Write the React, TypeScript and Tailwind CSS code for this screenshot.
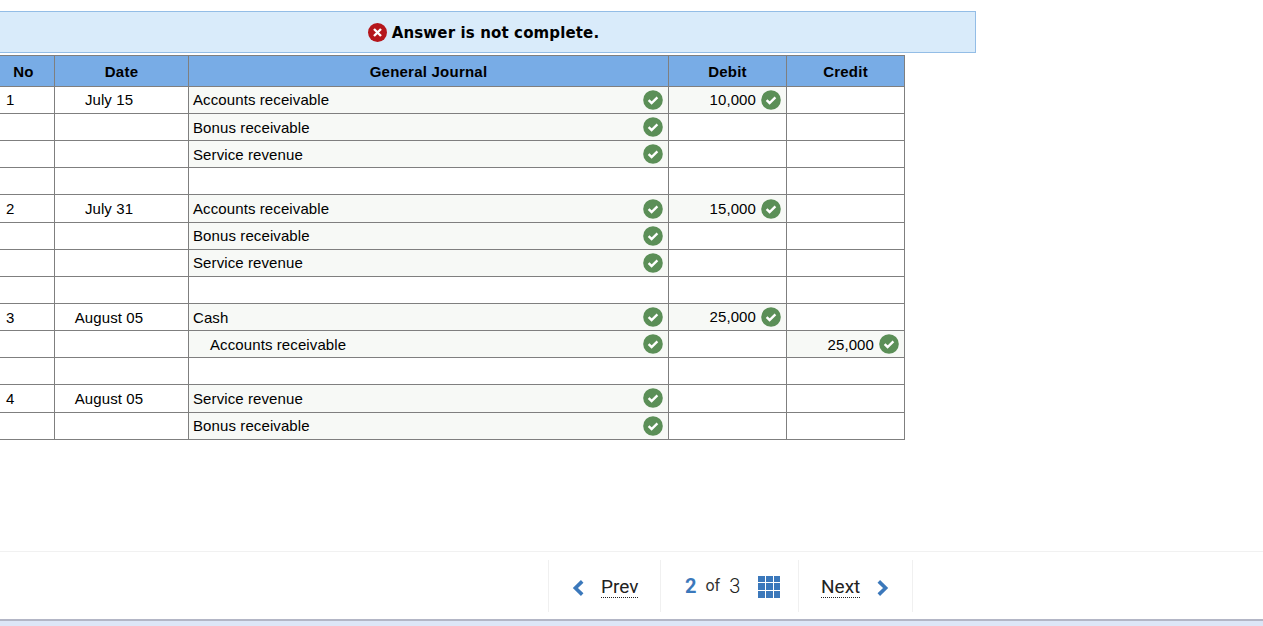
import React from "react";

interface Row {
  no?: string;
  date?: string;
  account?: string;
  indent?: boolean;
  debit?: string;
  credit?: string;
  h: string;
  nudge?: boolean;
  nudgeAmount?: boolean;
  checkUp?: boolean;
}

const rows: Row[] = [
  { no: "1", date: "July 15", account: "Accounts receivable", debit: "10,000", h: "h-[27px]" },
  { account: "Bonus receivable", h: "h-[27px]", nudge: true },
  { account: "Service revenue", h: "h-[27px]", nudge: true },
  { h: "h-[27px]" },
  { no: "2", date: "July 31", account: "Accounts receivable", debit: "15,000", h: "h-[28px]", nudge: true, nudgeAmount: true },
  { account: "Bonus receivable", h: "h-[27px]" },
  { account: "Service revenue", h: "h-[27px]" },
  { h: "h-[27px]" },
  { no: "3", date: "August 05", account: "Cash", debit: "25,000", h: "h-[27px]", nudge: true },
  { account: "Accounts receivable", indent: true, credit: "25,000", h: "h-[27px]", nudge: true, nudgeAmount: true },
  { h: "h-[27px]" },
  { no: "4", date: "August 05", account: "Service revenue", h: "h-[28px]", nudge: true, checkUp: true },
  { account: "Bonus receivable", h: "h-[27px]" },
];

const CheckBadge = ({ up }: { up?: boolean }) => (
  <svg width="20" height="20" viewBox="0 0 20 20" className={`shrink-0 ${up ? "mb-[2px]" : ""}`}>
    <circle cx="10" cy="10" r="9.8" fill="#5b8f57" />
    <path d="M5.6 10.2 8.6 13 14.4 7.4" fill="none" stroke="#fff" strokeWidth="2.4" />
  </svg>
);

const AmountCell = ({ value, nudge }: { value?: string; nudge?: boolean }) => (
  <div
    className={`flex items-center justify-end gap-[5px] border-r border-[#7f7f7f] pr-[5px] ${
      value ? "bg-[#f7f9f6]" : ""
    }`}
  >
    {value && (
      <>
        <span className={nudge ? "pt-[2px]" : ""}>{value}</span>
        <CheckBadge />
      </>
    )}
  </div>
);

const App: React.FC = () => {
  return (
    <div className="h-[626px] overflow-hidden bg-white font-['Liberation_Sans',Arial,sans-serif] text-black">
      <div className="pt-[11px]">
        <div className="flex h-[42px] w-[976px] items-center justify-center gap-[5px] border border-l-0 border-[#93bde6] bg-[#d9ebfa] pr-[8px] font-['DejaVu_Sans',Verdana,sans-serif] text-[15px] font-bold tracking-[0.13px]">
          <svg width="19" height="19" viewBox="0 0 19 19" className="shrink-0">
            <circle cx="9.5" cy="9.5" r="9.5" fill="#b5161b" />
            <path d="M6 6 13 13M13 6 6 13" stroke="#fff" strokeWidth="2.4" />
          </svg>
          <span className="pt-[2px]">Answer is not complete.</span>
        </div>
      </div>

      <div className="mt-[2px] w-[905px] border-t border-[#7f7f7f] text-[15px] tracking-[0.1px]">
        <div className="grid h-[31px] grid-cols-[55px_134px_480px_118px_118px] items-stretch border-b border-[#7f7f7f] bg-[#78ace6] font-bold tracking-[0.23px]">
          {["No", "Date", "General Journal", "Debit", "Credit"].map((label, i) => (
            <div
              key={label}
              className={`flex items-center justify-center border-r border-[#7f7f7f] pt-[2px] ${
                i === 0 ? "pr-[7px]" : ""
              }`}
            >
              {label}
            </div>
          ))}
        </div>

        {rows.map((row, i) => (
          <div
            key={i}
            className={`grid grid-cols-[55px_134px_480px_118px_118px] border-b border-[#7f7f7f] ${row.h}`}
          >
            <div className={`flex items-center border-r border-[#7f7f7f] pl-[6px] ${row.nudge ? "pt-[2px]" : ""}`}>
              {row.no}
            </div>
            <div
              className={`flex items-center justify-center border-r border-[#7f7f7f] pr-[31px] pl-[6px] ${
                row.nudge ? "pt-[2px]" : ""
              }`}
            >
              <span className="w-full text-center">{row.date}</span>
            </div>
            <div
              className={`flex items-center justify-between border-r border-[#7f7f7f] pr-[5px] ${
                row.indent ? "pl-[21px]" : "pl-[4px]"
              } ${row.account ? "bg-[#f7f9f6]" : ""}`}
            >
              {row.account && (
                <>
                  <span className={row.nudge ? "pt-[2px]" : ""}>{row.account}</span>
                  <CheckBadge up={row.checkUp} />
                </>
              )}
            </div>
            <AmountCell value={row.debit} nudge={row.nudgeAmount} />
            <AmountCell value={row.credit} nudge={row.nudgeAmount} />
          </div>
        ))}
      </div>

      <div className="mt-[111px] flex h-[70px] items-center justify-end border-t border-b-2 border-t-[#f1f1f1] border-b-[#b3b6c6] pr-[350px] font-['Roboto','Open_Sans',sans-serif]">
        <div className="flex h-[52px] items-stretch">
          <div className="flex w-[113px] items-center border-x border-[#f0f0f0] pt-[3px] pl-[23px]">
            <svg width="12" height="16" viewBox="0 0 12 16" className="mt-[1px] shrink-0">
              <path d="M10.2 1.4 3.4 8l6.8 6.6" fill="none" stroke="#3b78bb" strokeWidth="3.6" />
            </svg>
            <span className="ml-[17px] border-b border-dotted border-[#222] text-[19px] leading-[20px] text-[#222]">Prev</span>
          </div>
          <div className="flex w-[138px] items-center border-r border-[#f0f0f0] pl-[24px]">
            <span className="text-[20px] font-bold text-[#3b78bb]">2</span>
            <span className="ml-[9px] text-[16px] text-[#333]">of</span>
            <span className="ml-[9px] text-[20px] font-light text-[#222]">3</span>
            <span className="ml-[18px] grid h-[22px] w-[22px] translate-y-[1px] grid-cols-3 gap-[1px]">
              {Array.from({ length: 9 }).map((_, i) => (
                <span key={i} className="bg-[#3b78bb]" />
              ))}
            </span>
          </div>
          <div className="flex w-[114px] items-center border-r border-[#f0f0f0] pt-[3px] pl-[22px]">
            <span className="border-b border-dotted border-[#222] text-[19px] leading-[20px] text-[#222]">Next</span>
            <svg width="12" height="16" viewBox="0 0 12 16" className="mt-[1px] ml-[17px] shrink-0">
              <path d="M1.8 1.4 8.6 8l-6.8 6.6" fill="none" stroke="#3b78bb" strokeWidth="3.6" />
            </svg>
          </div>
        </div>
      </div>
      <div className="h-[8px] bg-[#dde6f7]" />
    </div>
  );
};

export default App;
